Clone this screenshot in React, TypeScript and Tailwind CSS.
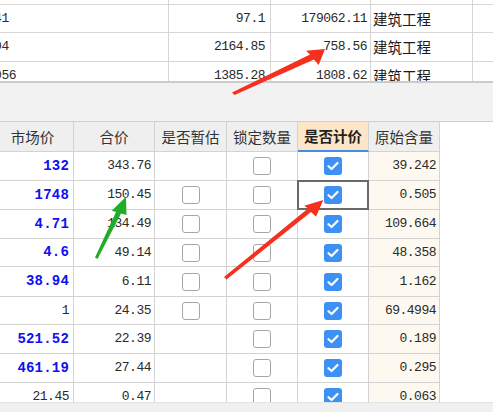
import React from "react";

const mono = "font-['Liberation_Mono',monospace]";
const cjk = "font-['Noto_Sans_CJK_SC','Noto_Sans',sans-serif]";

type TopRow = { code: string; qty: string; total: string; kind: string; h: string };

const topRows: TopRow[] = [
  { code: "010101041", qty: "97.1", total: "179062.11", kind: "建筑工程", h: "h-[28px]" },
  { code: "010102004", qty: "2164.85", total: "758.56", kind: "建筑工程", h: "h-[29px]" },
  { code: "0101030056", qty: "1385.28", total: "1808.62", kind: "建筑工程", h: "h-[29px]" },
];

type Row = {
  price: string;
  blue: boolean;
  sum: string;
  est: boolean;
  base: string;
  h: string;
  selected?: boolean;
};

const rows: Row[] = [
  { price: "132", blue: true, sum: "343.76", est: false, base: "39.242", h: "h-[29px]" },
  { price: "1748", blue: true, sum: "150.45", est: true, base: "0.505", h: "h-[29px]", selected: true },
  { price: "4.71", blue: true, sum: "134.49", est: true, base: "109.664", h: "h-[29px]" },
  { price: "4.6", blue: true, sum: "49.14", est: true, base: "48.358", h: "h-[28px]" },
  { price: "38.94", blue: true, sum: "6.11", est: true, base: "1.162", h: "h-[30px]" },
  { price: "1", blue: false, sum: "24.35", est: true, base: "69.4994", h: "h-[28px]" },
  { price: "521.52", blue: true, sum: "22.39", est: false, base: "0.189", h: "h-[29px]" },
  { price: "461.19", blue: true, sum: "27.44", est: false, base: "0.295", h: "h-[29px]" },
  { price: "21.45", blue: false, sum: "0.47", est: false, base: "0.063", h: "h-[29px]" },
];

function Box() {
  return <span className="block h-[18px] w-[18px] rounded-[3px] border-[1.5px] border-[#a6a6a6] bg-white" />;
}

function Checked() {
  return (
    <span className="flex h-[18px] w-[18px] items-center justify-center rounded-[3px] bg-[#3d91f4]">
      <svg width="12" height="10" viewBox="0 0 12 10">
        <path d="M1.5 5.2 L4.6 8 L10.5 2" fill="none" stroke="#fff" strokeWidth="2.2" strokeLinecap="round" strokeLinejoin="round" />
      </svg>
    </span>
  );
}

const cell = "border-r border-b border-[#d3d3d3] flex items-center shrink-0";
const num = `${mono} text-[13px] tracking-[-0.5px] text-[#2a2a2a]`;

export default function App() {
  return (
    <div className="relative h-[412px] w-[493px] overflow-hidden bg-white">
      {/* upper grid */}
      <div className="h-[81px] overflow-hidden bg-white">
        <div className="-ml-[60px] flex flex-col">
          <div className="flex h-[5px]">
            <div className="w-[229px] shrink-0 border-r border-b border-[#d6d6d6]" />
            <div className="w-[102px] shrink-0 border-r border-b border-[#d6d6d6]" />
            <div className="w-[100px] shrink-0 border-r border-b border-[#d6d6d6]" />
            <div className="w-[102px] shrink-0 border-r border-b border-[#d6d6d6]" />
            <div className="flex-1 border-b border-[#d6d6d6]" />
          </div>
          {topRows.map((r) => (
            <div key={r.code} className={`flex ${r.h}`}>
              <div className={`w-[229px] border-r border-b border-[#d6d6d6] flex items-center shrink-0 pl-[3px] ${num}`}>{r.code}</div>
              <div className={`w-[102px] border-r border-b border-[#d6d6d6] flex items-center shrink-0 justify-end pr-[5px] ${num}`}>{r.qty}</div>
              <div className={`w-[100px] border-r border-b border-[#d6d6d6] flex items-center shrink-0 justify-end pr-[3px] ${num}`}>{r.total}</div>
              <div className={`w-[102px] border-r border-b border-[#d6d6d6] flex items-center shrink-0 pl-[2px] ${cjk} text-[14.5px] text-[#1a1a1a]`}>{r.kind}</div>
              <div className="flex-1 border-b border-[#d6d6d6]" />
            </div>
          ))}
        </div>
      </div>
      <div className="h-[2px] bg-[#cbcbcb]" />
      <div className="h-[38px] bg-[#f2f2f2]" />

      {/* lower grid */}
      <div className="border-t border-[#cfcfcf]">
        <div className="-ml-[8px] flex flex-col">
          <div className={`flex h-[30px] ${cjk} text-[14.5px] text-[#333]`}>
            <div className={`${cell} w-[82px] justify-center bg-[#efefef]`}>市场价</div>
            <div className={`${cell} w-[81px] justify-center bg-[#efefef]`}>合价</div>
            <div className={`${cell} w-[72px] justify-center bg-[#efefef]`}>是否暂估</div>
            <div className={`${cell} w-[71px] justify-center bg-[#efefef]`}>锁定数量</div>
            <div className="flex w-[71px] shrink-0 items-center justify-center border-r border-b-2 border-r-[#d3d3d3] border-b-[#3f8fe8] bg-[#fde6c8] font-bold text-[#222]">
              是否计价
            </div>
            <div className={`${cell} w-[71px] justify-center bg-[#efefef]`}>原始含量</div>
          </div>
          {rows.map((r, i) => (
            <div key={i} className={`flex ${r.h}`}>
              <div
                className={`${cell} w-[82px] justify-end pr-[4px] ${mono} ${
                  r.blue ? "text-[14px] font-bold tracking-[0.2px] text-[#1010f0]" : "text-[13px] tracking-[-0.5px] text-[#2a2a2a]"
                }`}
              >
                {r.price}
              </div>
              <div className={`${cell} w-[81px] justify-end pr-[3px] ${num}`}>{r.sum}</div>
              <div className={`${cell} w-[72px] justify-center`}>{r.est && <Box />}</div>
              <div className={`${cell} w-[71px] justify-center`}>
                <Box />
              </div>
              <div className={`${cell} relative w-[71px] justify-center`}>
                <Checked />
                {r.selected && (
                  <span className="absolute -top-[1px] -left-[1px] h-[30px] w-[72px] border-2 border-[#6a6a6a]" />
                )}
              </div>
              <div className={`${cell} w-[71px] justify-end bg-[#fdf9f1] pr-[3px] ${num}`}>{r.base}</div>
            </div>
          ))}
        </div>
      </div>
      <div className="absolute bottom-0 left-0 h-[10px] w-full border-t border-[#e2e2e2] bg-[#f0f0f0]" />

      {/* annotation arrows */}
      <svg className="pointer-events-none absolute inset-0" width="493" height="412" viewBox="0 0 493 412">
        <polygon points="232,92.5 310,54.5 306,50.8 325,49 318.7,65 314,59.5 234.5,95" fill="#f5301e" />
        <polygon points="224,277 308,208.5 304.3,205.7 323.3,200 316,216.7 311,212 226.5,279.5" fill="#f5301e" />
        <polygon points="95,257.5 116,212 111.7,210.7 126,196.7 126.5,215 121,213.5 97.5,259" fill="#21ad27" />
      </svg>
    </div>
  );
}
